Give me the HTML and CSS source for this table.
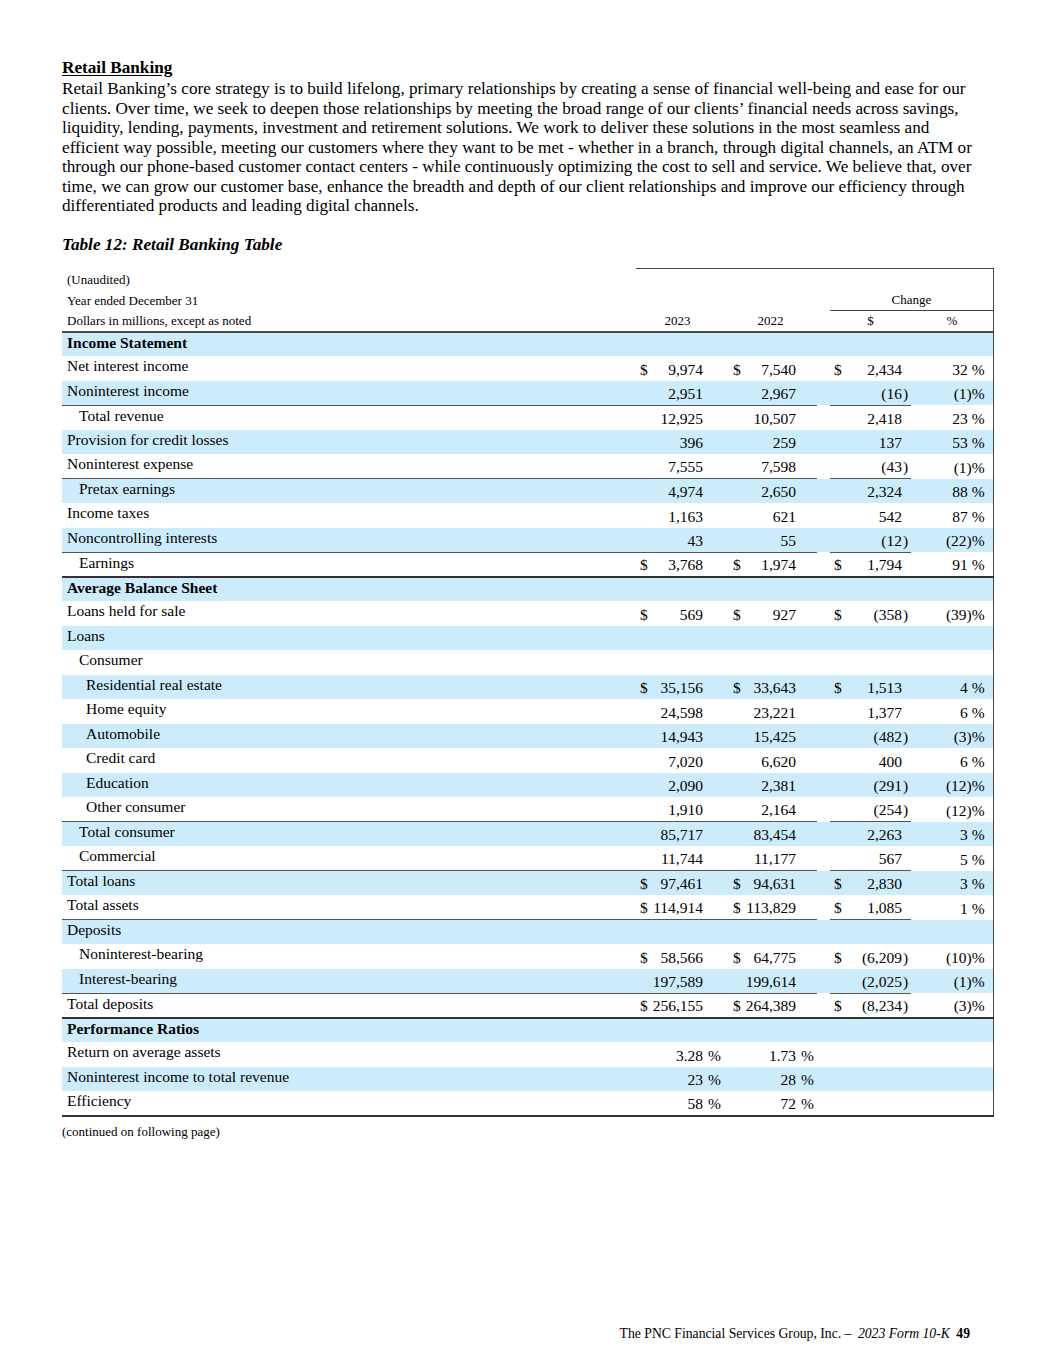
FILE: index.html
```html
<!DOCTYPE html>
<html lang="en">
<head>
<meta charset="utf-8">
<title>Retail Banking</title>
<link rel="stylesheet" href="styles.css">
</head>
<body>
<div class="page">
  <h1 class="title">Retail Banking</h1>
  <p class="intro">Retail Banking’s core strategy is to build lifelong, primary relationships by creating a sense of financial well-being and ease for our clients. Over time, we seek to deepen those relationships by meeting the broad range of our clients’ financial needs across savings, liquidity, lending, payments, investment and retirement solutions. We work to deliver these solutions in the most seamless and efficient way possible, meeting our customers where they want to be met - whether in a branch, through digital channels, an ATM or through our phone-based customer contact centers - while continuously optimizing the cost to sell and service. We believe that, over time, we can grow our customer base, enhance the breadth and depth of our client relationships and improve our efficiency through differentiated products and leading digital channels.</p>
  <h2 class="tt">Table 12: Retail Banking Table</h2>

  <table class="rb">
    <colgroup>
      <col class="c-label"><col class="c-d"><col class="c-v"><col class="c-s">
      <col class="c-d"><col class="c-v"><col class="c-s2"><col class="c-g">
      <col class="c-d"><col class="c-vc"><col class="c-p"><col class="c-pc">
    </colgroup>
    <thead>
      <tr class="hr">
        <td class="hl">(Unaudited)</td>
        <td colspan="11" class="top"></td>
      </tr>
      <tr class="hr">
        <td class="hl">Year ended December 31</td>
        <td colspan="7"></td>
        <td colspan="4" class="chg">Change</td>
      </tr>
      <tr class="hr hend">
        <td class="hl">Dollars in millions, except as noted</td>
        <td></td><td class="hc">2023</td><td></td>
        <td></td><td class="hc">2022</td><td></td>
        <td></td>
        <td colspan="3" class="hc">$</td>
        <td class="hc">%</td>
      </tr>
    </thead>
    <tbody>
      <tr><td class="l b">Income Statement</td><td></td><td></td><td></td><td></td><td></td><td></td><td></td><td></td><td></td><td></td><td></td></tr>
      <tr><td class="l">Net interest income</td><td class="d">$</td><td class="v">9,974</td><td></td><td class="d">$</td><td class="v">7,540</td><td></td><td></td><td class="d">$</td><td class="v">2,434</td><td class="p"></td><td class="pc">32 %</td></tr>
      <tr class="u"><td class="l">Noninterest income</td><td class="d"></td><td class="v">2,951</td><td></td><td class="d"></td><td class="v">2,967</td><td></td><td class="g"></td><td class="d"></td><td class="v">(16</td><td class="p">)</td><td class="pc">(1)%</td></tr>
      <tr><td class="l l1">Total revenue</td><td class="d"></td><td class="v">12,925</td><td></td><td class="d"></td><td class="v">10,507</td><td></td><td></td><td class="d"></td><td class="v">2,418</td><td class="p"></td><td class="pc">23 %</td></tr>
      <tr><td class="l">Provision for credit losses</td><td class="d"></td><td class="v">396</td><td></td><td class="d"></td><td class="v">259</td><td></td><td></td><td class="d"></td><td class="v">137</td><td class="p"></td><td class="pc">53 %</td></tr>
      <tr class="u"><td class="l">Noninterest expense</td><td class="d"></td><td class="v">7,555</td><td></td><td class="d"></td><td class="v">7,598</td><td></td><td class="g"></td><td class="d"></td><td class="v">(43</td><td class="p">)</td><td class="pc">(1)%</td></tr>
      <tr><td class="l l1">Pretax earnings</td><td class="d"></td><td class="v">4,974</td><td></td><td class="d"></td><td class="v">2,650</td><td></td><td></td><td class="d"></td><td class="v">2,324</td><td class="p"></td><td class="pc">88 %</td></tr>
      <tr><td class="l">Income taxes</td><td class="d"></td><td class="v">1,163</td><td></td><td class="d"></td><td class="v">621</td><td></td><td></td><td class="d"></td><td class="v">542</td><td class="p"></td><td class="pc">87 %</td></tr>
      <tr class="u"><td class="l">Noncontrolling interests</td><td class="d"></td><td class="v">43</td><td></td><td class="d"></td><td class="v">55</td><td></td><td class="g"></td><td class="d"></td><td class="v">(12</td><td class="p">)</td><td class="pc">(22)%</td></tr>
      <tr class="sec"><td class="l l1">Earnings</td><td class="d">$</td><td class="v">3,768</td><td></td><td class="d">$</td><td class="v">1,974</td><td></td><td></td><td class="d">$</td><td class="v">1,794</td><td class="p"></td><td class="pc">91 %</td></tr>

      <tr><td class="l b">Average Balance Sheet</td><td></td><td></td><td></td><td></td><td></td><td></td><td></td><td></td><td></td><td></td><td></td></tr>
      <tr><td class="l">Loans held for sale</td><td class="d">$</td><td class="v">569</td><td></td><td class="d">$</td><td class="v">927</td><td></td><td></td><td class="d">$</td><td class="v">(358</td><td class="p">)</td><td class="pc">(39)%</td></tr>
      <tr><td class="l">Loans</td><td></td><td></td><td></td><td></td><td></td><td></td><td></td><td></td><td></td><td></td><td></td></tr>
      <tr><td class="l l1">Consumer</td><td></td><td></td><td></td><td></td><td></td><td></td><td></td><td></td><td></td><td></td><td></td></tr>
      <tr><td class="l l2">Residential real estate</td><td class="d">$</td><td class="v">35,156</td><td></td><td class="d">$</td><td class="v">33,643</td><td></td><td></td><td class="d">$</td><td class="v">1,513</td><td class="p"></td><td class="pc">4 %</td></tr>
      <tr><td class="l l2">Home equity</td><td class="d"></td><td class="v">24,598</td><td></td><td class="d"></td><td class="v">23,221</td><td></td><td></td><td class="d"></td><td class="v">1,377</td><td class="p"></td><td class="pc">6 %</td></tr>
      <tr><td class="l l2">Automobile</td><td class="d"></td><td class="v">14,943</td><td></td><td class="d"></td><td class="v">15,425</td><td></td><td></td><td class="d"></td><td class="v">(482</td><td class="p">)</td><td class="pc">(3)%</td></tr>
      <tr><td class="l l2">Credit card</td><td class="d"></td><td class="v">7,020</td><td></td><td class="d"></td><td class="v">6,620</td><td></td><td></td><td class="d"></td><td class="v">400</td><td class="p"></td><td class="pc">6 %</td></tr>
      <tr><td class="l l2">Education</td><td class="d"></td><td class="v">2,090</td><td></td><td class="d"></td><td class="v">2,381</td><td></td><td></td><td class="d"></td><td class="v">(291</td><td class="p">)</td><td class="pc">(12)%</td></tr>
      <tr class="u"><td class="l l2">Other consumer</td><td class="d"></td><td class="v">1,910</td><td></td><td class="d"></td><td class="v">2,164</td><td></td><td class="g"></td><td class="d"></td><td class="v">(254</td><td class="p">)</td><td class="pc">(12)%</td></tr>
      <tr><td class="l l1">Total consumer</td><td class="d"></td><td class="v">85,717</td><td></td><td class="d"></td><td class="v">83,454</td><td></td><td></td><td class="d"></td><td class="v">2,263</td><td class="p"></td><td class="pc">3 %</td></tr>
      <tr class="u"><td class="l l1">Commercial</td><td class="d"></td><td class="v">11,744</td><td></td><td class="d"></td><td class="v">11,177</td><td></td><td class="g"></td><td class="d"></td><td class="v">567</td><td class="p"></td><td class="pc">5 %</td></tr>
      <tr><td class="l">Total loans</td><td class="d">$</td><td class="v">97,461</td><td></td><td class="d">$</td><td class="v">94,631</td><td></td><td></td><td class="d">$</td><td class="v">2,830</td><td class="p"></td><td class="pc">3 %</td></tr>
      <tr class="u"><td class="l">Total assets</td><td class="d">$</td><td class="v">114,914</td><td></td><td class="d">$</td><td class="v">113,829</td><td></td><td class="g"></td><td class="d">$</td><td class="v">1,085</td><td class="p"></td><td class="pc">1 %</td></tr>
      <tr><td class="l">Deposits</td><td></td><td></td><td></td><td></td><td></td><td></td><td></td><td></td><td></td><td></td><td></td></tr>
      <tr><td class="l l1">Noninterest-bearing</td><td class="d">$</td><td class="v">58,566</td><td></td><td class="d">$</td><td class="v">64,775</td><td></td><td></td><td class="d">$</td><td class="v">(6,209</td><td class="p">)</td><td class="pc">(10)%</td></tr>
      <tr class="u"><td class="l l1">Interest-bearing</td><td class="d"></td><td class="v">197,589</td><td></td><td class="d"></td><td class="v">199,614</td><td></td><td class="g"></td><td class="d"></td><td class="v">(2,025</td><td class="p">)</td><td class="pc">(1)%</td></tr>
      <tr class="sec"><td class="l">Total deposits</td><td class="d">$</td><td class="v">256,155</td><td></td><td class="d">$</td><td class="v">264,389</td><td></td><td></td><td class="d">$</td><td class="v">(8,234</td><td class="p">)</td><td class="pc">(3)%</td></tr>

      <tr><td class="l b">Performance Ratios</td><td></td><td></td><td></td><td></td><td></td><td></td><td></td><td></td><td></td><td></td><td></td></tr>
      <tr><td class="l">Return on average assets</td><td class="d"></td><td class="v">3.28</td><td class="s">%</td><td class="d"></td><td class="v">1.73</td><td class="s">%</td><td></td><td></td><td></td><td></td><td></td></tr>
      <tr><td class="l">Noninterest income to total revenue</td><td class="d"></td><td class="v">23</td><td class="s">%</td><td class="d"></td><td class="v">28</td><td class="s">%</td><td></td><td></td><td></td><td></td><td></td></tr>
      <tr class="sec"><td class="l">Efficiency</td><td class="d"></td><td class="v">58</td><td class="s">%</td><td class="d"></td><td class="v">72</td><td class="s">%</td><td></td><td></td><td></td><td></td><td></td></tr>
    </tbody>
  </table>
  <p class="cont">(continued on following page)</p>

  <div class="footer">The PNC Financial Services Group, Inc. – <span class="fi">2023 Form 10-K</span> <span class="fb">49</span></div>
</div>
</body>
</html>
```

FILE: styles.css
```css
html, body {
  margin: 0;
  padding: 0;
  background: #ffffff;
}

body {
  font-family: "Liberation Serif", "Times New Roman", serif;
  color: #000000;
}

.page {
  box-sizing: border-box;
  min-height: 1365px;
  padding: 58px 62px 23px 62px;
  display: flex;
  flex-direction: column;
}

.title {
  margin: 0;
  font-size: 17.2px;
  line-height: 20px;
  font-weight: bold;
  text-decoration: underline;
  text-underline-offset: 2px;
}

.intro {
  margin: 1px 0 0 0;
  max-width: 926px;
  font-size: 17.2px;
  line-height: 19.5px;
}

.tt {
  margin: 19.5px 0 13px 0;
  font-size: 17.2px;
  line-height: 20px;
  font-weight: bold;
  font-style: italic;
}

.rb {
  width: 931px;
  table-layout: fixed;
  border-collapse: collapse;
  font-size: 15.5px;
}

.c-label { width: 574px; }
.c-d { width: 15px; }
.c-v { width: 53px; }
.c-s { width: 25px; }
.c-s2 { width: 20px; }
.c-g { width: 13px; }
.c-vc { width: 58px; }
.c-p { width: 8px; }
.c-pc { width: 82px; }

.rb td {
  padding: 0;
  white-space: nowrap;
}

.rb tr > td:last-child {
  border-right: 1px solid #444444;
}

/* header */
.hr {
  height: 21px;
}

.hr td {
  font-size: 13px;
  line-height: 15px;
  vertical-align: middle;
}

.hl {
  padding-left: 5px !important;
}

.top {
  border-top: 1px solid #444444;
}

.chg {
  text-align: center;
  border-bottom: 1px solid #444444;
}

.hc {
  text-align: center;
}

.hend td {
  border-bottom: 2px solid #4a4a4a;
}

/* body rows */
.rb tbody tr {
  height: 24.5px;
}

.rb tbody td {
  line-height: 18px;
  vertical-align: bottom;
  padding-bottom: 2px;
}

.rb tbody tr:nth-child(odd) td {
  background: #cdecfb;
}

.rb tbody td.l {
  vertical-align: top;
  padding: 1px 0 0 5px;
}

.rb tbody td.l1 { padding-left: 17px; }
.rb tbody td.l2 { padding-left: 24px; }

.b {
  font-weight: bold;
}

.d {
  text-align: left;
  padding-left: 4px !important;
}

.v {
  text-align: right;
  padding-right: 1px !important;
}

.s {
  text-align: left;
  padding-left: 4px !important;
}

.p {
  text-align: left;
}

.pc {
  text-align: right;
  padding-right: 8px !important;
}

.rb tr.u td {
  border-bottom: 1px solid #555555;
}

.rb tr.u td.g,
.rb tr.u td.pc {
  border-bottom: none;
}

.rb tr.sec td {
  border-bottom: 2px solid #333333;
}

.cont {
  margin: 7px 0 0 0;
  font-size: 13px;
  line-height: 16px;
}

.footer {
  margin-top: auto;
  margin-right: 23px;
  text-align: right;
  font-size: 13.7px;
  line-height: 16px;
}

.fi {
  font-style: italic;
  margin-left: 3px;
}

.fb {
  font-weight: bold;
  margin-left: 3px;
}
```
